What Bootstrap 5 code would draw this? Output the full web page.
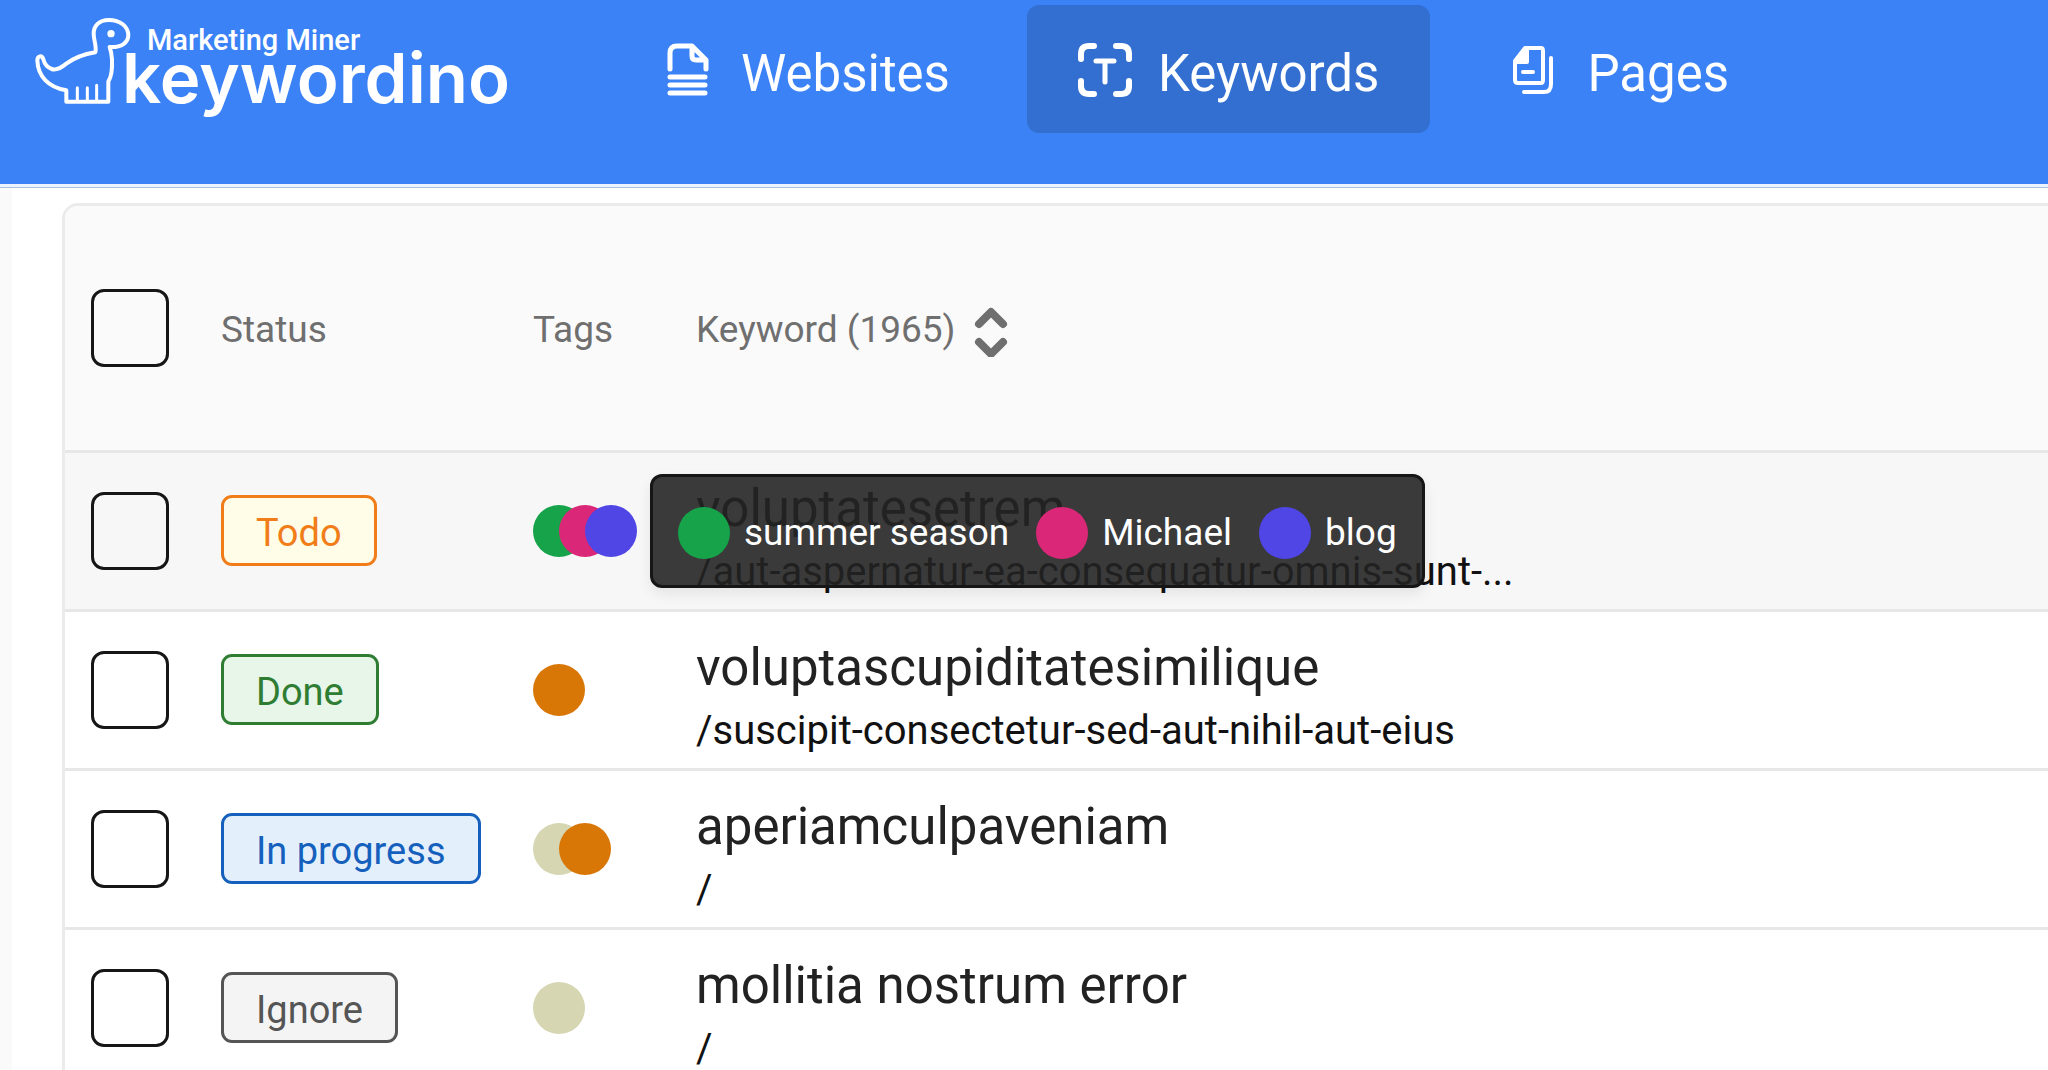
<!DOCTYPE html>
<html lang="en">
<head>
<meta charset="utf-8">
<meta name="viewport" content="width=device-width, initial-scale=1">
<title>Keywordino – Keywords</title>
<link href="https://cdn.jsdelivr.net/npm/bootstrap@5.3.0/dist/css/bootstrap.min.css" rel="stylesheet">
<style>
body { font-family: Roboto, "Liberation Sans", sans-serif; color: #222; background: #fff; }
.top-bar { background: #3b82f6; height: 188px; padding: 5px 32px 0; border-bottom: 1px solid #a9c0e6; box-shadow: inset 0 -3px 0 #edf3fd; }
.brand-logo { width: 476px; height: 120px; margin-top: 11px; overflow: visible; }
.main-nav { gap: 26px; margin-left: 102px; }
.main-nav .nav-link { height: 128px; padding: 10px 51px 0; gap: 26px; font-size: 51px; line-height: 72px; color: #fff; border-radius: 12px; }
.main-nav .nav-link.active { background: #336fd1; }
.main-nav svg { width: 54px; height: 54px; margin-bottom: 8px; }
.side-edge { width: 12px; background: #fafafa; }
.grid-card { margin: 15px 0 0 50px; border: 3px solid #ebebeb; border-right: 0; border-bottom: 0; border-radius: 16px 0 0 0; }
.grid-table { table-layout: fixed; --bs-table-bg: transparent; }
.grid-table > :not(caption) > * > * { padding: 15px 26px; border-bottom: 3px solid #e7e7e7; vertical-align: middle; box-shadow: none; }
.grid-table thead th { height: 245px; font-size: 37px; line-height: 54px; font-weight: 400; color: #6f6f6f; background: #fafafa; }
.grid-table thead th.head-label { padding-top: 20px; }
.grid-table .row-hover > td { background: #f7f7f7; }
.grid-table tbody td.kw-cell { padding-top: 20px; padding-bottom: 10px; }
.grid-table .gutter { padding: 0; }
.col-check { width: 130px; } .col-status { width: 312px; } .col-tags { width: 163px; } .col-end { width: 30px; }
.pick.form-check-input { width: 78px; height: 78px; margin: 0; border: 3px solid #161616; border-radius: 13px; background-color: transparent; display: block; }
.state { height: 71px; padding: 4px 32px 0; border: 3px solid; border-radius: 11px; font-size: 38px; line-height: 62px; white-space: nowrap; }
.state-todo, .state-todo:hover { color: #f07d1a; background: #fffde7; border-color: #f07d1a; }
.state-done, .state-done:hover { color: #2e7d32; background: #e8f5e9; border-color: #2e7d32; }
.state-prog, .state-prog:hover { color: #1560bd; background: #e3f0fc; border-color: #1560bd; }
.state-skip, .state-skip:hover { color: #555; background: #f4f4f4; border-color: #555; }
.dot { width: 52px; height: 52px; border-radius: 50%; flex: none; }
.dots .dot + .dot { margin-left: -26px; }
.c-green { background: #16a34a; } .c-pink { background: #db2777; } .c-indigo { background: #4f46e5; }
.c-amber { background: #d97706; } .c-sand { background: #d6d6b2; }
.tag-tip { left: 100%; top: 50%; transform: translateY(-50%); margin-left: 13px; height: 114px; padding: 4px 25px 0; gap: 27px; font-size: 37px; line-height: 54px; color: #fff; white-space: nowrap; background: rgba(35,35,35,.89); border: 3px solid #161616; border-radius: 12px; box-shadow: 0 6px 14px rgba(0,0,0,.08); z-index: 5; }
.tag-tip .tip-item { gap: 14px; }
.kw { font-size: 51px; line-height: 72px; color: #222; }
.path { font-size: 40px; line-height: 54px; color: #111; }
.sort-btn, .sort-btn:hover { font: inherit; color: #6f6f6f; gap: 18px; }
.sort-btn svg { width: 34px; height: 54px; }
</style>
<script src="https://cdn.jsdelivr.net/npm/bootstrap@5.3.0/dist/js/bootstrap.bundle.min.js"></script>
</head>
<body>
<div class="vh-100 d-flex flex-column overflow-hidden">
  <header class="top-bar d-flex align-items-start flex-shrink-0">
    <a href="#" class="d-block flex-shrink-0" aria-label="Marketing Miner keywordino">
      <svg class="brand-logo d-block" viewBox="32 16 476 120" fill="#fff">
        <g transform="translate(20 0) scale(.3333)" fill="none" stroke="#fff" stroke-width="12" stroke-linejoin="round" stroke-linecap="round">
          <path d="M269 141C305 143 325 127 325 106C325 79 300 60 267 60C235 60 221 79 221 101C221 122 231 139 226 157C196 162 166 171 139 191C122 205 107 211 95 207C81 202 73 190 70 178C66 164 52 167 52 182C54 228 84 262 139 271L139 305H265V245C275 229 277 200 276 178C275 163 273 152 269 141Z"/>
          <path d="M172 263V302M202 263V302M230 256V302" stroke-width="9"/>
          <circle cx="273" cy="101" r="11" fill="#fff" stroke="none"/>
        </g>
        <text x="147" y="50" font-family="Roboto, sans-serif" font-size="29" font-weight="500">Marketing Miner</text>
        <text x="122" y="103" font-family="Inter, sans-serif" font-size="69" font-weight="600">keywordino</text>
      </svg>
    </a>
    <nav class="main-nav nav flex-nowrap">
      <a class="nav-link d-flex align-items-center" href="#">
        <svg viewBox="0 0 54 54" fill="none" stroke="#fff" stroke-width="5" stroke-linecap="round" stroke-linejoin="round"><path d="M9 26V10Q9 3 16 3H31L45 17V26M31 3V13Q31 17 35 17H45M9 34H44M9 42H44M9 50H44"/></svg>
        Websites</a>
      <a class="nav-link active d-flex align-items-center" href="#" aria-current="page">
        <svg viewBox="0 0 54 54" fill="none" stroke="#fff" stroke-width="6" stroke-linecap="round" stroke-linejoin="round"><path d="M3 16V11Q3 3 11 3H16M38 3H43Q51 3 51 11V16M3 38V43Q3 51 11 51H16M38 51H43Q51 51 51 43V38"/><path d="M18 18H36M27 18V39" stroke-width="5"/></svg>
        Keywords</a>
      <a class="nav-link d-flex align-items-center" href="#">
        <svg viewBox="0 0 54 54" fill="none" stroke="#fff" stroke-width="4" stroke-linecap="round" stroke-linejoin="round"><path d="M8 18L18 5H34Q36 5 36 8V37Q36 40 34 40H11Q8 40 8 37ZM16 29H26"/><path d="M8 19L20 5V19Z" fill="#fff"/><path d="M44 15V41Q44 49 37 49H17"/></svg>
        Pages</a>
    </nav>
  </header>
  <main class="d-flex flex-grow-1">
    <div class="side-edge flex-shrink-0"></div>
    <div class="grid-card flex-grow-1 overflow-hidden">
      <table class="grid-table table mb-0">
        <colgroup><col class="col-check"><col class="col-status"><col class="col-tags"><col><col class="col-end"></colgroup>
        <thead>
          <tr>
            <th scope="col"><input class="pick form-check-input" type="checkbox" aria-label="Select all keywords"></th>
            <th class="head-label" scope="col">Status</th>
            <th class="head-label" scope="col">Tags</th>
            <th class="head-label" scope="col"><button type="button" class="sort-btn btn p-0 border-0 d-flex align-items-center">Keyword (1965)
              <svg viewBox="0 0 34 54" fill="none" stroke="currentColor" stroke-width="8" stroke-linecap="round" stroke-linejoin="round"><path d="M5 21L17 9L29 21M5 39L17 51L29 39"/></svg></button></th>
            <th class="gutter"></th>
          </tr>
        </thead>
        <tbody>
          <tr class="row-hover">
            <td><input class="pick form-check-input" type="checkbox" aria-label="Select voluptatesetrem"></td>
            <td><button type="button" class="state state-todo btn">Todo</button></td>
            <td><div class="dots d-inline-flex position-relative align-middle"><span class="dot c-green"></span><span class="dot c-pink"></span><span class="dot c-indigo"></span>
              <div class="tag-tip position-absolute d-flex align-items-center" role="tooltip">
                <span class="tip-item d-flex align-items-center"><span class="dot c-green"></span>summer season</span>
                <span class="tip-item d-flex align-items-center"><span class="dot c-pink"></span>Michael</span>
                <span class="tip-item d-flex align-items-center"><span class="dot c-indigo"></span>blog</span>
              </div></div></td>
            <td class="kw-cell"><div class="kw">voluptatesetrem</div><div class="path">/aut-aspernatur-ea-consequatur-omnis-sunt-...</div></td>
            <td class="gutter"></td>
          </tr>
          <tr>
            <td><input class="pick form-check-input" type="checkbox" aria-label="Select voluptascupiditatesimilique"></td>
            <td><button type="button" class="state state-done btn">Done</button></td>
            <td><div class="dots d-flex"><span class="dot c-amber"></span></div></td>
            <td class="kw-cell"><div class="kw">voluptascupiditatesimilique</div><div class="path">/suscipit-consectetur-sed-aut-nihil-aut-eius</div></td>
            <td class="gutter"></td>
          </tr>
          <tr>
            <td><input class="pick form-check-input" type="checkbox" aria-label="Select aperiamculpaveniam"></td>
            <td><button type="button" class="state state-prog btn">In progress</button></td>
            <td><div class="dots d-flex"><span class="dot c-sand"></span><span class="dot c-amber"></span></div></td>
            <td class="kw-cell"><div class="kw">aperiamculpaveniam</div><div class="path">/</div></td>
            <td class="gutter"></td>
          </tr>
          <tr>
            <td><input class="pick form-check-input" type="checkbox" aria-label="Select mollitia nostrum error"></td>
            <td><button type="button" class="state state-skip btn">Ignore</button></td>
            <td><div class="dots d-flex"><span class="dot c-sand"></span></div></td>
            <td class="kw-cell"><div class="kw">mollitia nostrum error</div><div class="path">/</div></td>
            <td class="gutter"></td>
          </tr>
        </tbody>
      </table>
    </div>
  </main>
</div>
</body>
</html>
